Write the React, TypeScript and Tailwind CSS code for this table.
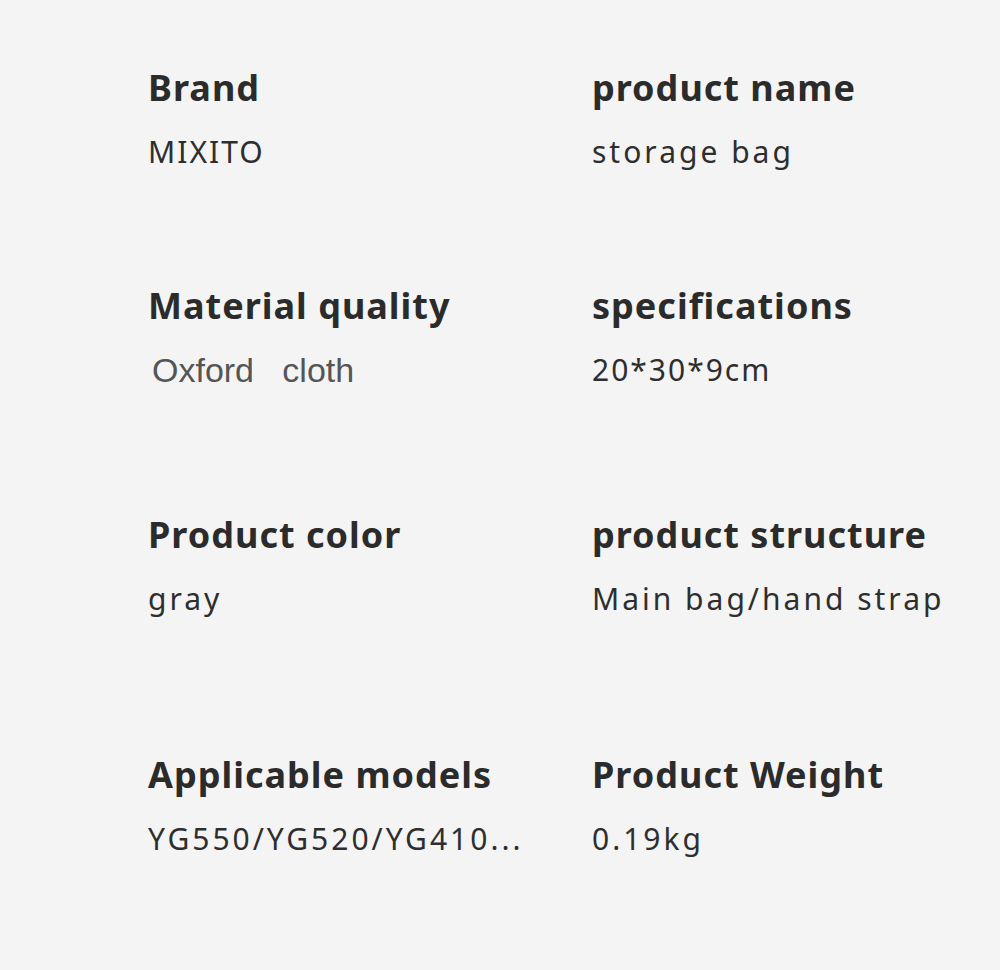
const ROWS = [
  {
    mt: 'mt-[66px]',
    cells: [
      { label: 'Brand', value: 'MIXITO', tight: true },
      { label: 'product name', value: 'storage bag' },
    ],
  },
  {
    mt: 'mt-[112px]',
    cells: [
      { label: 'Material quality', value: 'Oxford   cloth', plain: true },
      { label: 'specifications', value: '20*30*9cm', tight: true },
    ],
  },
  {
    mt: 'mt-[123px]',
    cells: [
      { label: 'Product color', value: 'gray' },
      { label: 'product structure', value: 'Main bag/hand strap' },
    ],
  },
  {
    mt: 'mt-[134px]',
    cells: [
      { label: 'Applicable models', value: 'YG550/YG520/YG410...' },
      { label: 'Product Weight', value: '0.19kg' },
    ],
  },
]

type Cell = { label: string; value: string; plain?: boolean; tight?: boolean }

function SpecCell({ label, value, plain, tight }: Cell) {
  return (
    <div className="flex flex-col gap-[22px]">
      <h3 className="font-['Noto_Sans',sans-serif] text-[36px] leading-[44px] font-bold tracking-[1px] text-[#2b2b2b]">
        {label}
      </h3>
      {plain ? (
        <p className="pl-[4px] font-['Liberation_Sans',Arial,sans-serif] text-[34px] leading-[40px] whitespace-pre text-[#555]">
          {value}
        </p>
      ) : (
        <p
          className={
            tight
              ? "font-['Noto_Sans',sans-serif] text-[30px] leading-[40px] tracking-[2px] text-[#2e2e2e]"
              : "font-['Noto_Sans',sans-serif] text-[30px] leading-[40px] tracking-[3px] text-[#2e2e2e]"
          }
        >
          {value}
        </p>
      )}
    </div>
  )
}

export default function App() {
  return (
    <div className="h-[970px] w-[1000px] overflow-hidden bg-[#f4f4f4] pl-[148px]">
      {ROWS.map((row, i) => (
        <div key={i} className={`grid grid-cols-[444px_1fr] ${row.mt}`}>
          {row.cells.map((cell) => (
            <SpecCell key={cell.label} {...cell} />
          ))}
        </div>
      ))}
    </div>
  )
}
